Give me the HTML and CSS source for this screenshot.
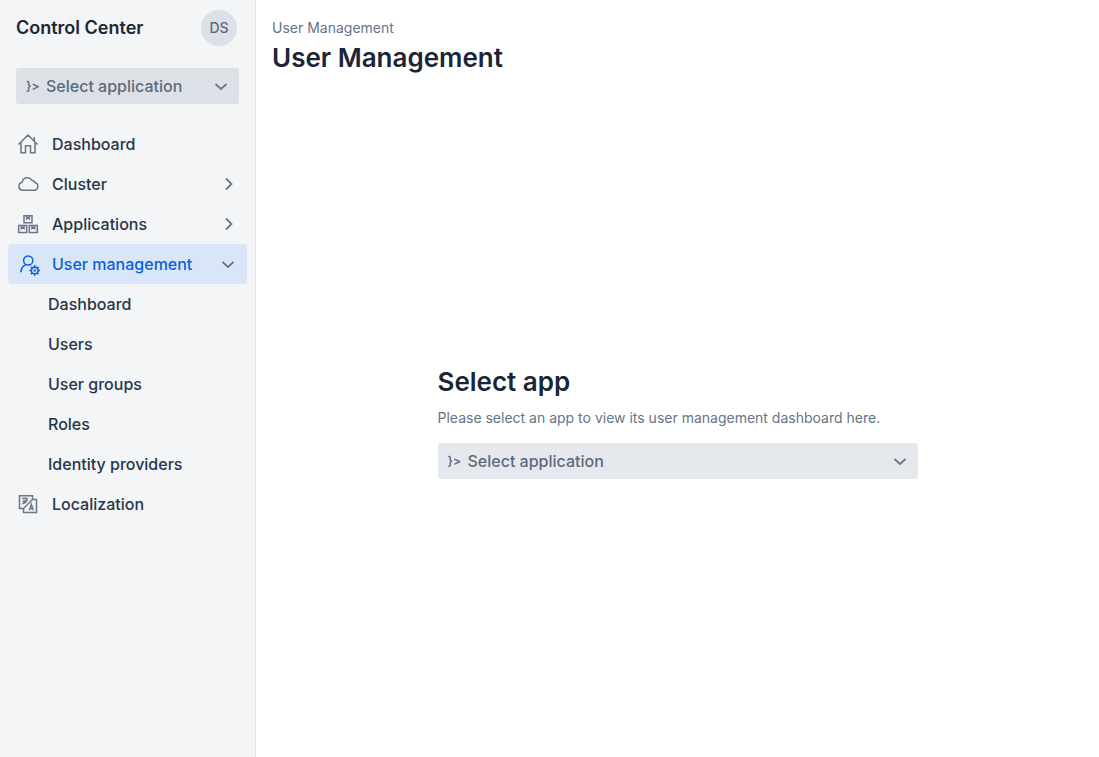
FILE: index.html
```html
<!DOCTYPE html>
<html lang="en">
<head>
<meta charset="utf-8">
<meta name="viewport" content="width=device-width, initial-scale=1">
<title>User Management</title>
<link rel="stylesheet" href="styles.css">
</head>
<body>
<div class="app">
  <aside class="sidebar">
    <header class="brand">
      <span class="brand-name">Control Center</span>
      <button class="avatar" type="button" aria-label="Account menu for DS">DS</button>
    </header>
    <div class="picker picker-side">
      <span class="picker-prefix" aria-hidden="true">}&gt;</span>
      <select class="picker-select" aria-label="Application">
        <option>Select application</option>
      </select>
      <svg class="picker-chevron" viewBox="0 0 16 16" aria-hidden="true"><path d="M2.500 6 8 11l5.500-5"/></svg>
    </div>
    <nav class="nav" aria-label="Main">
      <a class="nav-item" href="#">
        <svg class="icon" viewBox="0 0 24 24" aria-hidden="true"><path d="M2.500 12.500 12 3l9.500 9.500M5 10.500v10.200h4.500v-7h5v7H19V10.500M18.200 8.800V5"/></svg>
        <span class="nav-label">Dashboard</span>
      </a>
      <a class="nav-item" href="#">
        <svg class="icon" viewBox="0 0 24 24" aria-hidden="true"><path d="M6 18.300h11.700a4 4 0 0 0 1-7.900 3.200 3.200 0 0 0-2.900-2.200 5.200 5.200 0 0 0-9.600 2.100 4.100 4.100 0 0 0-.2 8z"/></svg>
        <span class="nav-label">Cluster</span>
        <svg class="chevron" viewBox="0 0 16 16" aria-hidden="true"><path d="m6 2.500 5.500 5.500L6 13.500"/></svg>
      </a>
      <a class="nav-item" href="#">
        <svg class="icon" viewBox="0 0 24 24" aria-hidden="true"><path d="M8 3.700h8v7H8zM2.700 13.500h8v7h-8zM13.300 13.500h8v7h-8zM10.700 4v2.800l1.300-.9 1.300.9V4M5.400 14v2.600l1.300-.9 1.300.9V14M16 14v2.600l1.300-.9 1.300.9V14"/></svg>
        <span class="nav-label">Applications</span>
        <svg class="chevron" viewBox="0 0 16 16" aria-hidden="true"><path d="m6 2.500 5.500 5.500L6 13.500"/></svg>
      </a>
      <a class="nav-item is-active" href="#" aria-current="page">
        <svg class="icon" viewBox="0 0 24 24" aria-hidden="true"><circle cx="12.200" cy="8.500" r="4.600"/><path d="M5 20.300c0-4 1.600-6.300 4.800-7.700"/><circle cx="18.700" cy="18.500" r="3.300"/><circle cx="18.700" cy="18.500" r=".5"/><path d="M18.700 15.200v-2.100M18.700 21.800v2M15.400 18.500h-2M22 18.500h2M16.400 16.200l-1.500-1.500M21 16.200l1.500-1.500M16.400 20.800l-1.500 1.500M21 20.800l1.500 1.500"/></svg>
        <span class="nav-label">User management</span>
        <svg class="chevron" viewBox="0 0 16 16" aria-hidden="true"><path d="M2.500 6 8 11l5.500-5"/></svg>
      </a>
      <div class="subnav">
        <a class="nav-item" href="#">Dashboard</a>
        <a class="nav-item" href="#">Users</a>
        <a class="nav-item" href="#">User groups</a>
        <a class="nav-item" href="#">Roles</a>
        <a class="nav-item" href="#">Identity providers</a>
      </div>
      <a class="nav-item" href="#">
        <svg class="icon" viewBox="0 0 24 24" aria-hidden="true"><path d="M16.500 7.500V3.700h-13v12.800h4M16.500 7.500h4v13h-13v-4l9-9zM6 6.500h6M9 5.500v1M7 9h4.500M10.800 6.500c0 2.500-1.800 4.700-4.500 5.300M7 9c.6 1 1.300 1.600 2.400 2M13.300 18.300l2-6 2 6M14 16.400h2.700"/></svg>
        <span class="nav-label">Localization</span>
      </a>
    </nav>
  </aside>
  <main class="main">
    <header class="page-header">
      <a class="breadcrumb" href="#">User Management</a>
      <h1 class="title">User Management</h1>
    </header>
    <div class="content">
      <section class="prompt">
        <h2 class="title">Select app</h2>
        <p class="prompt-text">Please select an app to view its user management dashboard here.</p>
        <div class="picker">
          <span class="picker-prefix" aria-hidden="true">}&gt;</span>
          <select class="picker-select" aria-label="Application for user management">
            <option>Select application</option>
          </select>
          <svg class="picker-chevron" viewBox="0 0 16 16" aria-hidden="true"><path d="M2.500 6 8 11l5.500-5"/></svg>
        </div>
      </section>
    </div>
  </main>
</div>
</body>
</html>
```
FILE: styles.css
```css
* {
  box-sizing: border-box;
}

body {
  margin: 0;
  background: #fff;
  color: #1a2636;
  font-family: Inter, "Liberation Sans", sans-serif;
  font-size: 16px;
  line-height: 24px;
}

a {
  color: inherit;
  text-decoration: none;
}

svg {
  fill: none;
  stroke: #6a7889;
  stroke-width: 1.5;
}

.app {
  display: flex;
  min-height: 100vh;
}

.sidebar {
  flex: none;
  width: 256px;
  border-right: 1px solid #e3e6ea;
  background: #f3f5f7;
}

.brand {
  display: flex;
  align-items: center;
  justify-content: space-between;
  padding: 10px 18px 0 16px;
}

.brand-name {
  font-size: 18px;
  font-weight: 600;
  line-height: 26px;
}

.avatar {
  width: 36px;
  height: 36px;
  padding: 0;
  border: 0;
  border-radius: 50%;
  background: #dce1e8;
  color: #5c6a7c;
  font: 500 14px/20px Inter, sans-serif;
}

.picker {
  display: grid;
  grid-template-columns: 30px 1fr 36px;
  align-items: center;
  height: 36px;
  border-radius: 3px;
  background: #e5e9ee;
  color: #5c6a7c;
}

.picker-side {
  margin: 22px 16px 20px;
  background: #dce1e8;
}

.picker-prefix {
  grid-area: 1 / 1;
  padding-left: 10px;
  font-size: 12px;
  font-weight: 600;
}

.picker-select {
  grid-area: 1 / 1 / 2 / -1;
  width: 100%;
  height: 36px;
  padding: 0 36px 0 30px;
  border: 0;
  border-radius: 3px;
  appearance: none;
  background: transparent;
  color: inherit;
  font: 500 16px/24px Inter, sans-serif;
}

.picker-chevron,
.chevron {
  width: 16px;
  height: 16px;
  stroke-width: 1.8;
}

.picker-chevron {
  grid-area: 1 / 3;
  margin-left: 10px;
  pointer-events: none;
}

.nav {
  padding: 0 8px;
}

.nav-item {
  display: flex;
  align-items: center;
  gap: 12px;
  height: 40px;
  padding: 0 11px 0 8px;
  border-radius: 4px;
  color: #26364a;
  font-weight: 500;
}

.nav-label {
  flex: 1;
}

.icon {
  width: 24px;
  height: 24px;
}

.is-active {
  background: #d9e6f8;
  color: #0a5fdc;
}

.is-active .icon {
  stroke: #0a5fdc;
}

.subnav {
  padding-left: 32px;
}

.main {
  display: flex;
  flex: 1;
  flex-direction: column;
  min-width: 0;
}

.page-header {
  padding: 16px 16px 10px;
}

.breadcrumb {
  display: block;
  color: #667487;
  font-size: 14px;
}

.title {
  margin: 0;
  font-size: 26px;
  font-weight: 600;
  line-height: 36px;
}

.content {
  display: flex;
  flex: 1;
  align-items: center;
  justify-content: center;
  padding: 0 16px;
}

.prompt {
  width: 100%;
  max-width: 480px;
}

.prompt-text {
  margin: 6px 0 13px;
  color: #667487;
  font-size: 14px;
}
```
